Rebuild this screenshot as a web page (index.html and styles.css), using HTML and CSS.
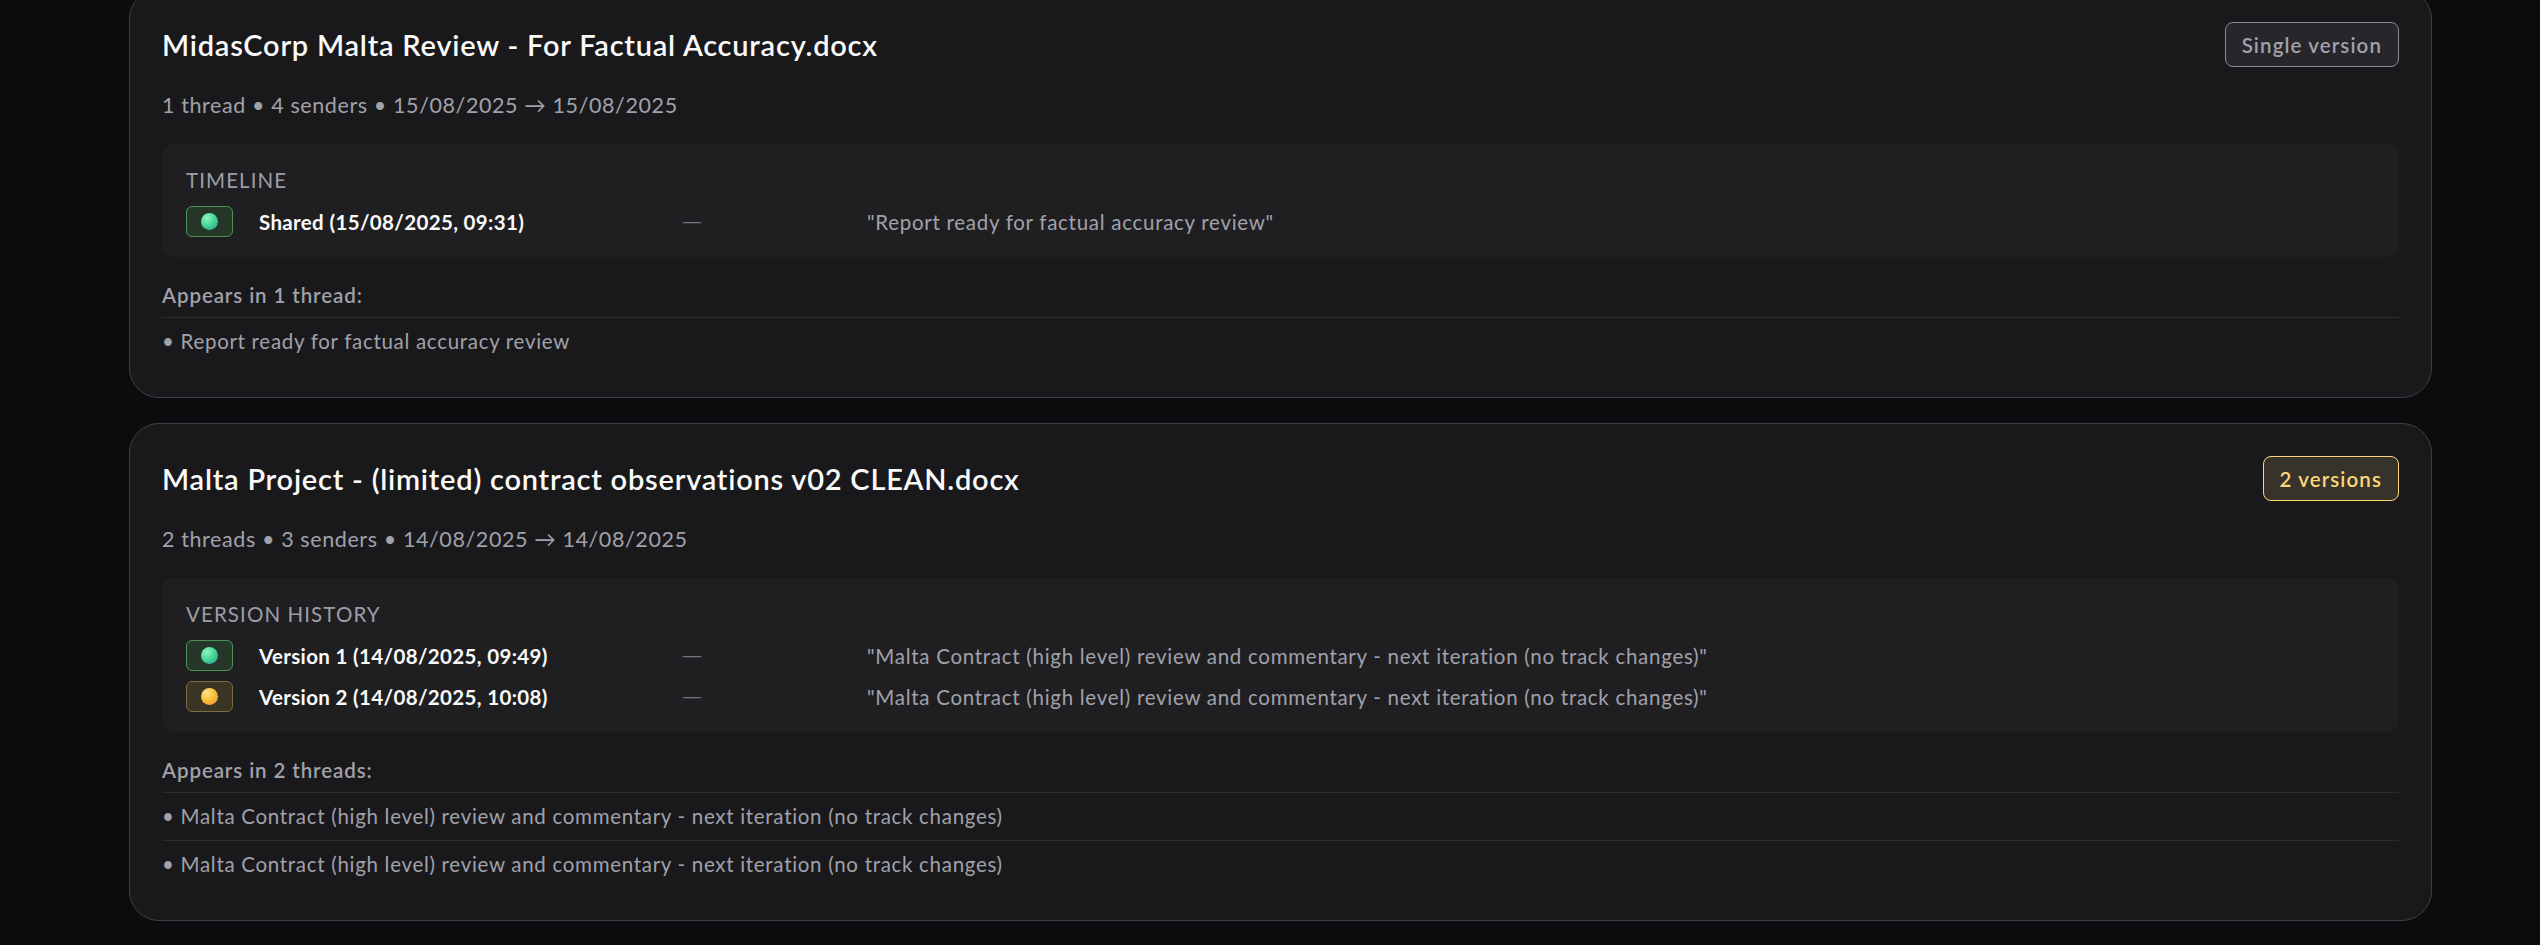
FILE: index.html
```html
<!DOCTYPE html>
<html lang="en">
<head>
<meta charset="utf-8">
<title>Documents</title>
<link rel="stylesheet" href="styles.css">
</head>
<body>
<main class="list">
  <section class="card">
    <header class="card-head">
      <h2 class="doc-title">MidasCorp Malta Review - For Factual Accuracy.docx</h2>
      <span class="badge badge-single">Single version</span>
    </header>
    <p class="meta">1 thread • 4 senders • 15/08/2025 → 15/08/2025</p>
    <div class="history">
      <div class="history-label">Timeline</div>
      <div class="rows">
        <div class="row">
          <span class="chip chip-green"><span class="dot"></span></span>
          <span class="row-label">Shared (15/08/2025, 09:31)</span>
          <span class="row-dash">—</span>
          <span class="row-quote">"Report ready for factual accuracy review"</span>
        </div>
      </div>
    </div>
    <h3 class="appears">Appears in 1 thread:</h3>
    <ul class="threads">
      <li class="thread">• Report ready for factual accuracy review</li>
    </ul>
  </section>

  <section class="card">
    <header class="card-head">
      <h2 class="doc-title">Malta Project - (limited) contract observations v02 CLEAN.docx</h2>
      <span class="badge badge-multi">2 versions</span>
    </header>
    <p class="meta">2 threads • 3 senders • 14/08/2025 → 14/08/2025</p>
    <div class="history">
      <div class="history-label">Version History</div>
      <div class="rows">
        <div class="row">
          <span class="chip chip-green"><span class="dot"></span></span>
          <span class="row-label">Version 1 (14/08/2025, 09:49)</span>
          <span class="row-dash">—</span>
          <span class="row-quote">"Malta Contract (high level) review and commentary - next iteration (no track changes)"</span>
        </div>
        <div class="row">
          <span class="chip chip-amber"><span class="dot"></span></span>
          <span class="row-label">Version 2 (14/08/2025, 10:08)</span>
          <span class="row-dash">—</span>
          <span class="row-quote">"Malta Contract (high level) review and commentary - next iteration (no track changes)"</span>
        </div>
      </div>
    </div>
    <h3 class="appears">Appears in 2 threads:</h3>
    <ul class="threads">
      <li class="thread">• Malta Contract (high level) review and commentary - next iteration (no track changes)</li>
      <li class="thread">• Malta Contract (high level) review and commentary - next iteration (no track changes)</li>
    </ul>
  </section>
</main>
</body>
</html>
```

FILE: styles.css
```css
* { box-sizing: border-box; }

html, body {
  margin: 0;
  padding: 0;
  background: #0c0c0e;
  height: 100%;
  overflow: hidden;
}

body {
  font-family: "Segoe UI", Lato, "Noto Sans", sans-serif;
  color: #f4f4f5;
}

.list {
  display: flex;
  flex-direction: column;
  gap: 25px;
  margin: -11px 108px 0 129px;
}

.card {
  background: #19191c;
  border: 1px solid #3f3f46;
  border-radius: 30px;
  padding: 32px;
}

.card-head {
  display: flex;
  align-items: center;
  justify-content: space-between;
  min-height: 45px;
}

.doc-title {
  margin: 0;
  font-size: 29px;
  line-height: 42px;
  font-weight: 600;
  letter-spacing: 0.77px;
  color: #fafafa;
}

.badge {
  display: inline-flex;
  align-items: center;
  height: 45px;
  padding: 0 16px;
  border-radius: 8px;
  font-size: 20.5px;
  font-weight: 600;
  letter-spacing: 1.1px;
  border: 1.5px solid;
}

.badge-single {
  color: #a1a1aa;
  border-color: #8d8d95;
  background: #27272b;
}

.badge-multi {
  color: #fcd679;
  border-color: #fcd679;
  background: #38332a;
}

.meta {
  margin: 22px 0 0;
  font-size: 21.5px;
  line-height: 32px;
  letter-spacing: 0.6px;
  color: #a1a1aa;
}

.history {
  margin-top: 23px;
  background: #1f1f22;
  border-radius: 12px;
  padding: 20px 24px;
}

.history-label {
  font-size: 20.5px;
  line-height: 32px;
  text-transform: uppercase;
  letter-spacing: 1.1px;
  color: #9d9da6;
  margin-bottom: 10px;
}

.rows {
  display: flex;
  flex-direction: column;
  gap: 10px;
}

.row {
  display: grid;
  grid-template-columns: 49px 399px 161px 1fr;
  column-gap: 24px;
  align-items: center;
  height: 31px;
}

.chip {
  width: 47px;
  height: 31px;
  border-radius: 6px;
  border: 1.5px solid;
  display: flex;
  align-items: center;
  justify-content: center;
}

.chip-green {
  border-color: #4a9556;
  background: #26372a;
}

.chip-amber {
  border-color: #7d6c42;
  background: #3a3424;
}

.dot {
  width: 17px;
  height: 17px;
  border-radius: 50%;
}

.chip-green .dot {
  background: radial-gradient(circle at 35% 30%, #8ef5c0 0%, #4fdc9a 40%, #2fae95 80%, #3b8fa0 100%);
}

.chip-amber .dot {
  background: radial-gradient(circle at 35% 30%, #ffe58a 0%, #f8c23a 45%, #ef9f3a 80%, #e0785a 100%);
}

.row-label {
  font-size: 20.5px;
  font-weight: 700;
  letter-spacing: 0.35px;
  color: #fafafa;
  white-space: nowrap;
}

.row-dash {
  font-family: "DejaVu Sans", sans-serif;
  font-size: 20px;
  line-height: 31px;
  color: #74747d;
}

.row-quote {
  font-size: 20.5px;
  letter-spacing: 0.72px;
  color: #a1a1aa;
  white-space: nowrap;
}

.appears {
  margin: 22px 0 0;
  padding-bottom: 6px;
  border-bottom: 1px solid #2c2c31;
  font-size: 20.5px;
  line-height: 32px;
  font-weight: 600;
  letter-spacing: 0.9px;
  color: #a1a1aa;
}

.threads {
  list-style: none;
  margin: 0;
  padding: 0;
}

.thread {
  padding: 8px 0;
  font-size: 20.5px;
  line-height: 31px;
  letter-spacing: 0.7px;
  color: #a1a1aa;
}

.thread + .thread {
  border-top: 1px solid #2c2c31;
}
```
